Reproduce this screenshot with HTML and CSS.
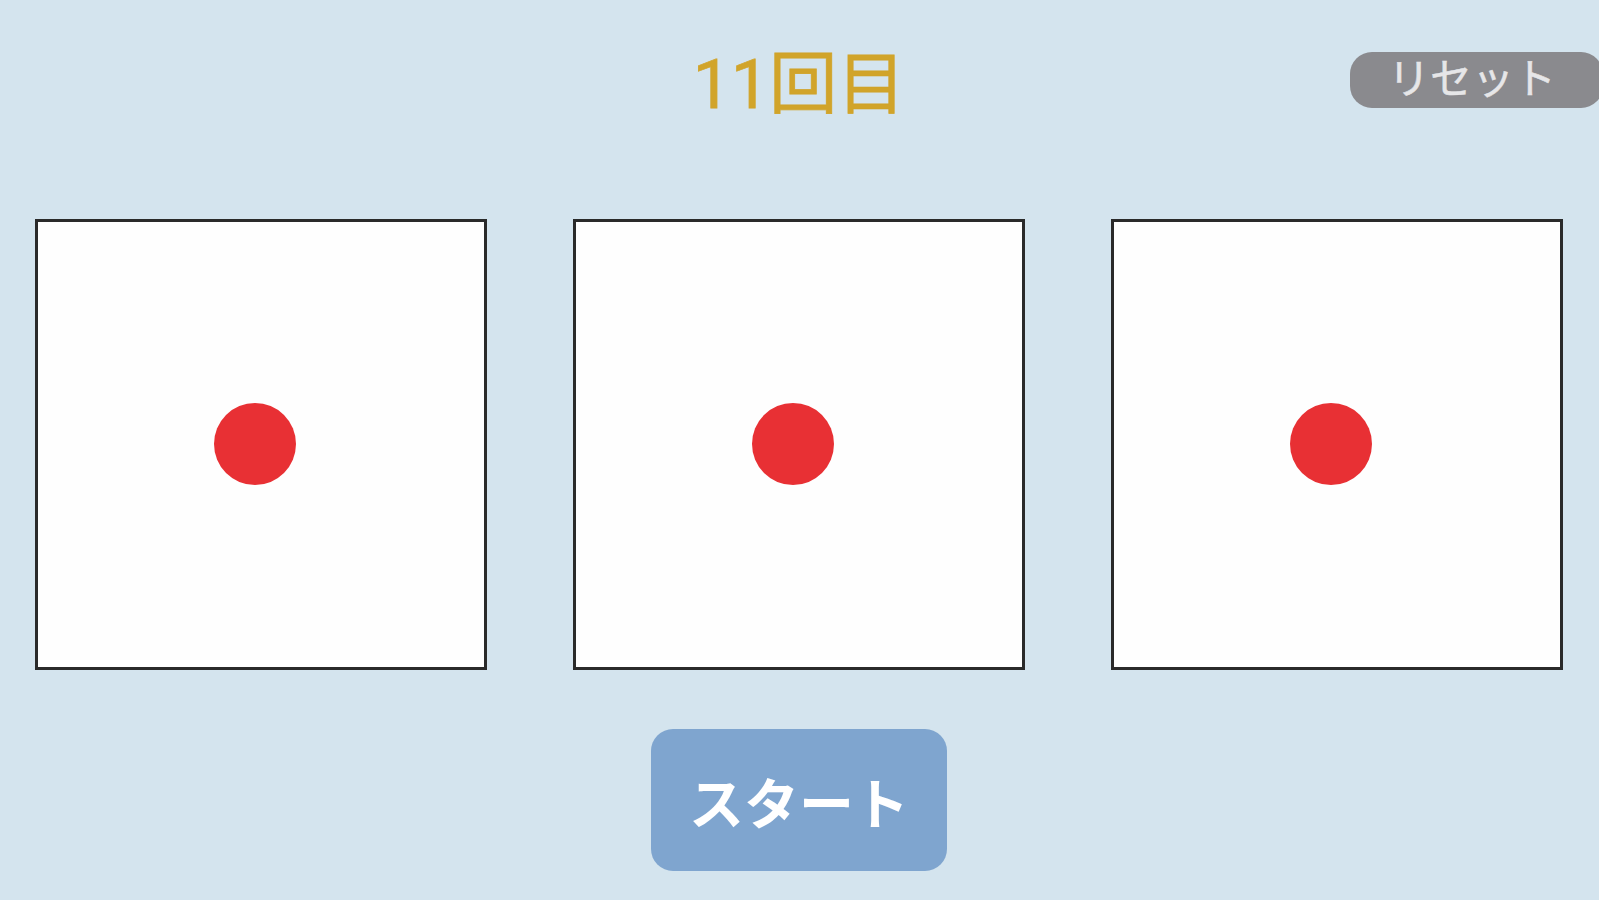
FILE: index.html
```html
<!DOCTYPE html>
<html lang="ja">
<head>
<meta charset="utf-8">
<title>11回目</title>
<link rel="stylesheet" href="styles.css">
</head>
<body>
<div class="app">
  <header class="header">
    <h1 class="title">11回目</h1>
    <button class="reset">リセット</button>
  </header>
  <main class="boxes">
    <div class="box"><span class="dot"></span></div>
    <div class="box"><span class="dot"></span></div>
    <div class="box"><span class="dot"></span></div>
  </main>
  <div class="actions">
    <button class="start">スタート</button>
  </div>
</div>
</body>
</html>
```
FILE: styles.css
```css
html, body {
  margin: 0;
  padding: 0;
  background: #d4e4ee;
  overflow: hidden;
}
body {
  font-family: Roboto, "Noto Sans CJK JP", "Noto Sans CJK SC", sans-serif;
  width: 1599px;
  height: 900px;
}
.app {
  position: relative;
  padding: 0 36px 0 35px;
}
.header {
  padding-top: 51px;
  display: flex;
  justify-content: center;
}
.title {
  margin: 0;
  font-size: 68px;
  line-height: 68px;
  font-weight: 400;
  color: #d1a42a;
  -webkit-text-stroke: 0.8px #d1a42a;
}
.reset {
  position: absolute;
  top: 52px;
  right: -4px;
  width: 253px;
  height: 56px;
  border: none;
  border-radius: 22px;
  background: #8a8a8e;
  color: #e6e6e8;
  font-family: inherit;
  font-size: 42px;
  font-weight: 400;
  line-height: 56px;
  padding: 0 0 0 38px;
  text-align: left;
  -webkit-text-stroke: 0.5px #e6e6e8;
}
.boxes {
  margin-top: 100px;
  display: grid;
  grid-template-columns: repeat(3, 452px);
  column-gap: 86px;
}
.box {
  box-sizing: border-box;
  height: 451px;
  border: 3px solid #2a2a2a;
  background: #fefefe;
  display: flex;
  align-items: center;
  justify-content: center;
}
.dot {
  width: 82px;
  height: 82px;
  border-radius: 50%;
  background: #e83034;
  margin-right: 12px;
  margin-top: -2px;
}
.actions {
  margin-top: 59px;
  display: flex;
  justify-content: center;
}
.start {
  width: 296px;
  height: 142px;
  border: none;
  border-radius: 22px;
  background: #7fa5cf;
  color: #ffffff;
  font-family: inherit;
  font-size: 55px;
  font-weight: 700;
  padding: 0;
}
```
